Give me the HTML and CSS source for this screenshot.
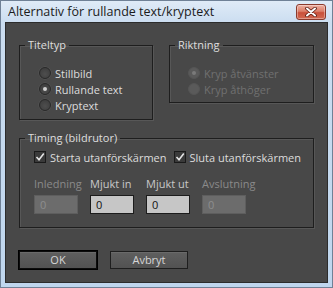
FILE: index.html
```html
<!DOCTYPE html>
<html>
<head>
<meta charset="utf-8">
<link rel="stylesheet" href="styles.css">
</head>
<body>
<div class="window">
  <div class="titlebar">
    <span class="title">Alternativ för rullande text/kryptext</span>
    <div class="close">
      <svg width="14" height="10" viewBox="0 0 14 10">
        <path d="M3 1.5 L11 8.5 M11 1.5 L3 8.5" stroke="#5a1a10" stroke-width="3.6" stroke-linecap="round"/>
        <path d="M3 1.5 L11 8.5 M11 1.5 L3 8.5" stroke="#ffffff" stroke-width="2" stroke-linecap="round"/>
      </svg>
    </div>
  </div>
  <div class="client">
    <div class="top-row">
      <fieldset class="group group-type">
        <legend>Titeltyp</legend>
        <div class="group-body">
          <div class="radio"><span class="rb"></span>Stillbild</div>
          <div class="radio"><span class="rb on"></span>Rullande text</div>
          <div class="radio"><span class="rb"></span>Kryptext</div>
        </div>
      </fieldset>
      <fieldset class="group group-dir">
        <legend>Riktning</legend>
        <div class="group-body">
          <div class="radio disabled"><span class="rb on"></span>Kryp åtvänster</div>
          <div class="radio disabled"><span class="rb"></span>Kryp åthöger</div>
        </div>
      </fieldset>
    </div>
    <fieldset class="group group-timing">
      <legend>Timing (bildrutor)</legend>
      <div class="group-body">
        <div class="checks">
          <div class="check"><span class="cb"><svg width="10" height="10" viewBox="0 0 10 10"><path d="M1.5 5 L4 7.8 L8.8 1.5" fill="none" stroke="#e4e4e4" stroke-width="1.6"/></svg></span>Starta utanförskärmen</div>
          <div class="check"><span class="cb"><svg width="10" height="10" viewBox="0 0 10 10"><path d="M1.5 5 L4 7.8 L8.8 1.5" fill="none" stroke="#e4e4e4" stroke-width="1.6"/></svg></span>Sluta utanförskärmen</div>
        </div>
        <div class="fields">
          <div class="field disabled"><span class="flabel">Inledning</span><span class="input">0</span></div>
          <div class="field"><span class="flabel">Mjukt in</span><span class="input">0</span></div>
          <div class="field"><span class="flabel">Mjukt ut</span><span class="input">0</span></div>
          <div class="field disabled"><span class="flabel">Avslutning</span><span class="input">0</span></div>
        </div>
      </div>
    </fieldset>
    <div class="buttons">
      <div class="btn default">OK</div>
      <div class="btn">Avbryt</div>
    </div>
  </div>
</div>
</body>
</html>
```
FILE: styles.css
```css
* { box-sizing: border-box; }
html, body { margin: 0; padding: 0; }
body {
  width: 333px;
  height: 288px;
  overflow: hidden;
  font-family: "Open Sans", "Noto Sans", sans-serif;
  background: #c3d8ee;
}
.window {
  width: 333px;
  height: 288px;
  border: 1px solid #6f8196;
  background: linear-gradient(#dfebf7, #cbddf0 22px, #bfd6ee);
  padding: 0 4px 4px 4px;
  display: flex;
  flex-direction: column;
}
.titlebar {
  height: 21px;
  display: flex;
  align-items: center;
  justify-content: space-between;
  padding: 0 2px 0 3px;
}
.title {
  font-size: 12.5px;
  color: #1b1b1b;
}
.close {
  width: 30px;
  height: 16px;
  border: 1px solid #8b3a2c;
  border-radius: 3px;
  background: linear-gradient(#eeb1a3, #dc7f69 45%, #c9503a 55%, #d26a52);
  display: flex;
  align-items: center;
  justify-content: center;
  box-shadow: inset 0 0 0 1px rgba(255,255,255,0.35);
}
.client {
  flex: 1;
  background: #484848;
  border: 1px solid #2c2c2c;
  padding: 15px 0 0 13px;
  font-size: 11px;
  color: #dcdcdc;
}
.top-row {
  display: flex;
  align-items: flex-start;
}
.group {
  margin: 0;
  padding: 0;
  min-width: 0;
  border: 1px solid #1e1e1e;
  box-shadow: 1px 1px 0 #575757, inset 1px 1px 0 #575757;
}
.group legend {
  margin-left: 5px;
  padding: 0 3px;
  line-height: 14px;
  font-size: 11px;
  color: #dedede;
}
.group-type {
  width: 134px;
}
.group-type .group-body {
  padding: 13px 0 6px 19px;
}
.group-dir {
  width: 145px;
  margin-left: 16px;
}
.group-dir .group-body {
  padding: 13px 0 5px 18px;
}
.radio {
  height: 16px;
  display: flex;
  align-items: center;
  white-space: nowrap;
}
.rb {
  width: 12px;
  height: 12px;
  border-radius: 50%;
  border: 1px solid #2a2a2a;
  background: radial-gradient(circle at 50% 60%, #4e4e4e, #3a3a3a);
  box-shadow: 0 0 0 0.5px #5a5a5a;
  margin-right: 4px;
  display: flex;
  align-items: center;
  justify-content: center;
  flex: none;
}
.rb.on::after {
  content: "";
  width: 4px;
  height: 4px;
  border-radius: 50%;
  background: #d0d0d0;
}
.radio.disabled { color: #707070; }
.radio.disabled .rb {
  border-color: #555;
  background: #5a5a5a;
  box-shadow: none;
}
.radio.disabled .rb.on::after { background: #7a7a7a; }
.group-timing {
  width: 295px;
  margin-top: 11px;
}
.group-timing .group-body {
  padding: 4px 0 13px 14px;
}
.checks {
  display: flex;
}
.check {
  width: 142px;
  height: 16px;
  display: flex;
  align-items: center;
  white-space: nowrap;
}
.cb {
  width: 12px;
  height: 12px;
  border: 1px solid #1a1a1a;
  background: #3a3a3a;
  margin-right: 4px;
  display: flex;
  align-items: center;
  justify-content: center;
  flex: none;
}
.fields {
  margin-top: 11px;
  display: grid;
  grid-template-columns: repeat(4, 44px);
  column-gap: 12px;
}
.field {
  display: flex;
  flex-direction: column;
}
.flabel {
  height: 16px;
  line-height: 16px;
  color: #c8c8c8;
  white-space: nowrap;
}
.input {
  margin-top: 3px;
  height: 19px;
  border: 1px solid #1c1c1c;
  background: #c6c6c6;
  color: #111;
  padding-left: 5px;
  line-height: 17px;
  font-size: 11px;
}
.field.disabled .flabel { color: #8a8a8a; }
.field.disabled .input {
  background: #6c6c6c;
  border-color: #5e5e5e;
  color: #8e8e8e;
}
.buttons {
  display: flex;
  margin-top: 23px;
  gap: 13px;
}
.btn {
  width: 78px;
  height: 18px;
  border: 1px solid #1e1e1e;
  background: linear-gradient(#5f5f5f, #525252);
  box-shadow: inset 0 1px 0 #6a6a6a;
  color: #d6d6d6;
  font-size: 11px;
  line-height: 16px;
  text-align: center;
}
.btn.default {
  border-color: #0c0c0c;
  box-shadow: 0 0 0 1px #000, inset 0 1px 0 #6a6a6a;
}
```
